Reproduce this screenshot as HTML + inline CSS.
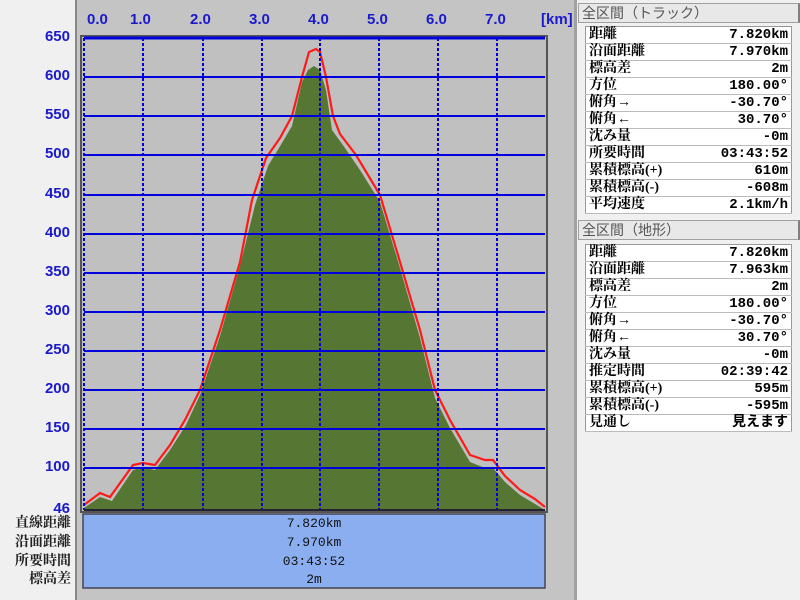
<!DOCTYPE html>
<html><head><meta charset="utf-8"><style>
body{margin:0;width:800px;height:600px;background:#f0f0f0;position:relative;overflow:hidden;font-family:"Liberation Serif","Noto Serif CJK SC","Noto Sans CJK JP",serif;}
.abs{position:absolute}
.hdr{position:absolute;left:578px;width:222px;height:20px;background:#e8e8e8;border:1px solid #a0a0a0;border-right:2px solid #808080;box-sizing:border-box;font-size:14px;color:#555;line-height:19px;padding-left:3px;font-family:"Noto Sans CJK JP",sans-serif}
table{position:absolute;left:585px;width:207px;border-collapse:collapse;background:#fff;border:1px solid #999;font-size:14px;font-family:"Liberation Serif","Noto Serif CJK JP",serif;font-weight:bold}
td{height:16px;padding:0 3px;border-bottom:1px solid #bbb;line-height:16px;white-space:nowrap}
td.r{text-align:right;font-family:"Liberation Mono","Noto Sans CJK JP",monospace;font-weight:bold;font-size:14px}
.ax{position:absolute;color:#1a1acc;font-size:15px;font-weight:bold;font-family:"Liberation Sans",sans-serif}
.ay{position:absolute;color:#1a1acc;font-size:15px;font-weight:bold;font-family:"Liberation Sans",sans-serif;right:730px}
.lb{position:absolute;right:729px;font-size:14px;font-weight:bold;font-family:"Noto Serif CJK SC",serif;color:#222;line-height:19px}
.bv{position:absolute;left:83px;width:462px;text-align:center;font-family:"Liberation Mono",monospace;font-size:13px;color:#111}
</style></head><body>
<div class="abs" style="left:75px;top:0;width:499px;height:600px;background:#c4c4c4;border-left:2px solid #888"></div>
<div class="abs" style="left:574px;top:0;width:3px;height:600px;background:#a0a0a0"></div>
<svg class="abs" style="left:0;top:0" width="800" height="600">
<rect x="81" y="36" width="466" height="476" fill="#c0c0c0" stroke="#555" stroke-width="2"/>
<polygon fill="#557733" points="84,510 84,508 100,497 112,501 133,470 143,467 155,470 170,450 186,425 200,395 220,336 240,266 255,205 268,166 282,143 292,126 302,82 308,70 314,66 320,70 326,90 332,130 345,148 360,170 380,202 400,268 420,338 435,398 450,428 470,462 485,468 493,468 505,482 520,495 535,504 545,510"/>
<polyline fill="none" stroke="#ff1a1a" stroke-width="2.2" points="84,505 100,493 110,497 133,465 143,463 155,465 170,445 185,420 200,390 220,330 240,262 252,200 266,158 280,138 292,116 302,77 309,52 316,49 320,52 326,77 333,116 340,134 356,155 380,195 400,262 420,330 435,390 450,420 470,455 485,460 493,460 505,476 520,490 535,499 545,507"/>
<g stroke="#0000dd" stroke-width="2">
<line x1="84" y1="38" x2="545" y2="38" stroke-width="3"/>
<line x1="84" y1="77" x2="545" y2="77"/><line x1="84" y1="116" x2="545" y2="116"/><line x1="84" y1="155" x2="545" y2="155"/><line x1="84" y1="195" x2="545" y2="195"/><line x1="84" y1="234" x2="545" y2="234"/><line x1="84" y1="273" x2="545" y2="273"/><line x1="84" y1="312" x2="545" y2="312"/><line x1="84" y1="351" x2="545" y2="351"/><line x1="84" y1="390" x2="545" y2="390"/><line x1="84" y1="429" x2="545" y2="429"/><line x1="84" y1="468" x2="545" y2="468"/>
</g>
<g stroke="#0000dd" stroke-width="2" stroke-dasharray="3,2">
<line x1="84" y1="38" x2="84" y2="510"/><line x1="143" y1="38" x2="143" y2="510"/><line x1="203" y1="38" x2="203" y2="510"/><line x1="262" y1="38" x2="262" y2="510"/><line x1="320" y1="38" x2="320" y2="510"/><line x1="379" y1="38" x2="379" y2="510"/><line x1="438" y1="38" x2="438" y2="510"/><line x1="497" y1="38" x2="497" y2="510"/>
</g>
<line x1="84" y1="510" x2="545" y2="510" stroke="#223" stroke-width="2"/>
<rect x="83" y="514" width="462" height="74" fill="#8aaef0" stroke="#445" stroke-width="1.5"/>
</svg>
<div class="ax" style="left:87px;top:11px">0.0</div><div class="ax" style="left:130px;top:11px">1.0</div><div class="ax" style="left:190px;top:11px">2.0</div><div class="ax" style="left:249px;top:11px">3.0</div><div class="ax" style="left:308px;top:11px">4.0</div><div class="ax" style="left:367px;top:11px">5.0</div><div class="ax" style="left:426px;top:11px">6.0</div><div class="ax" style="left:485px;top:11px">7.0</div><div class="ax" style="left:541px;top:11px">[km]</div>
<div class="ay" style="top:28px">650</div><div class="ay" style="top:67px">600</div><div class="ay" style="top:106px">550</div><div class="ay" style="top:145px">500</div><div class="ay" style="top:185px">450</div><div class="ay" style="top:224px">400</div><div class="ay" style="top:263px">350</div><div class="ay" style="top:302px">300</div><div class="ay" style="top:341px">250</div><div class="ay" style="top:380px">200</div><div class="ay" style="top:419px">150</div><div class="ay" style="top:458px">100</div><div class="ay" style="top:500px">46</div>
<div class="lb" style="top:513px">直線距離</div><div class="lb" style="top:532px">沿面距離</div><div class="lb" style="top:551px">所要時間</div><div class="lb" style="top:569px">標高差</div>
<div class="bv" style="top:516px">7.820km</div><div class="bv" style="top:535px">7.970km</div><div class="bv" style="top:554px">03:43:52</div><div class="bv" style="top:572px">2m</div>
<div class="hdr" style="top:3px">全区間（トラック）</div>
<table style="top:26px">
<tr><td>距離</td><td class="r">7.820km</td></tr><tr><td>沿面距離</td><td class="r">7.970km</td></tr><tr><td>標高差</td><td class="r">2m</td></tr><tr><td>方位</td><td class="r">180.00°</td></tr><tr><td>俯角→</td><td class="r">-30.70°</td></tr><tr><td>俯角←</td><td class="r">30.70°</td></tr><tr><td>沈み量</td><td class="r">-0m</td></tr><tr><td>所要時間</td><td class="r">03:43:52</td></tr><tr><td>累積標高(+)</td><td class="r">610m</td></tr><tr><td>累積標高(-)</td><td class="r">-608m</td></tr><tr><td>平均速度</td><td class="r">2.1km/h</td></tr>
</table>
<div class="hdr" style="top:220px">全区間（地形）</div>
<table style="top:244px">
<tr><td>距離</td><td class="r">7.820km</td></tr><tr><td>沿面距離</td><td class="r">7.963km</td></tr><tr><td>標高差</td><td class="r">2m</td></tr><tr><td>方位</td><td class="r">180.00°</td></tr><tr><td>俯角→</td><td class="r">-30.70°</td></tr><tr><td>俯角←</td><td class="r">30.70°</td></tr><tr><td>沈み量</td><td class="r">-0m</td></tr><tr><td>推定時間</td><td class="r">02:39:42</td></tr><tr><td>累積標高(+)</td><td class="r">595m</td></tr><tr><td>累積標高(-)</td><td class="r">-595m</td></tr><tr><td>見通し</td><td class="r">見えます</td></tr>
</table>
</body></html>
